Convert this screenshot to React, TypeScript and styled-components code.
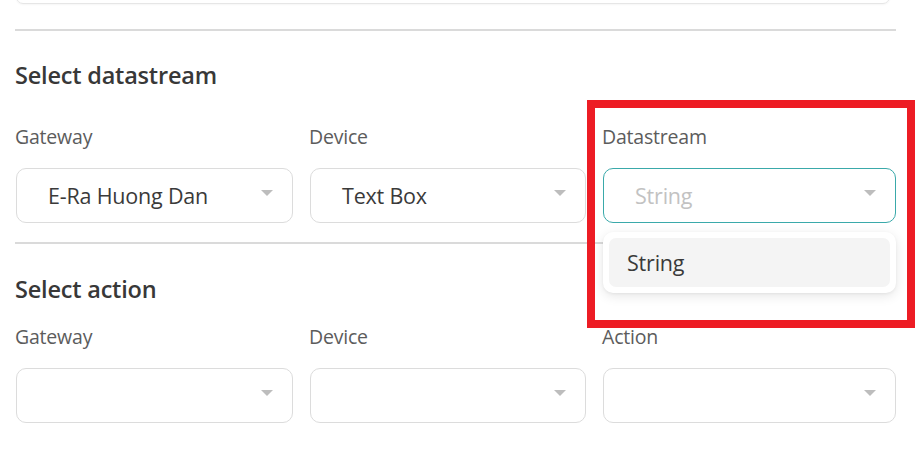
import React from "react";
import styled, { createGlobalStyle } from "styled-components";

const Global = createGlobalStyle`
  html, body { margin: 0; padding: 0; background: #ffffff; }
  body { font-family: "Open Sans", "Noto Sans", sans-serif; color: #333; }
  * { box-sizing: border-box; }
`;

const Page = styled.div`
  position: relative;
  width: 917px;
  height: 470px;
  overflow: hidden;
  padding: 0 21px 0 15px;
`;

const TopCard = styled.div`
  height: 14px;
  margin: -10px 6px 0 1px;
  border: 1px solid #e6e6e6;
  border-radius: 10px;
  box-shadow: 0 1px 2px rgba(0, 0, 0, 0.04);
`;

const Divider = styled.div<{ $top: number }>`
  height: 2px;
  background: #dadada;
  margin-top: ${(p) => p.$top}px;
`;

const Heading = styled.h2<{ $top: number; $bottom: number }>`
  margin: ${(p) => p.$top}px 0 ${(p) => p.$bottom}px;
  font-size: 23.5px;
  line-height: 30px;
  font-weight: 600;
  color: #383838;
  letter-spacing: -0.2px;
`;

const Grid = styled.div`
  display: grid;
  grid-template-columns: 277px 276px 293px;
  column-gap: 17px;
  padding-left: 1px;
`;

const Field = styled.div`
  position: relative;
  display: flex;
  flex-direction: column;
  gap: 19px;
`;

const Label = styled.div`
  margin-left: -1px;
  font-size: 19.5px;
  line-height: 24px;
  color: #5c5c5c;
  letter-spacing: -0.2px;
`;

const SelectBox = styled.div<{ $focused?: boolean }>`
  position: relative;
  height: 55px;
  display: flex;
  align-items: center;
  padding: 0 40px 0 31px;
  border: 1.5px solid ${(p) => (p.$focused ? "#3aa9aa" : "#dcdcdc")};
  border-radius: 10px;
  background: #fff;
`;

const Value = styled.span<{ $placeholder?: boolean }>`
  font-size: 21.5px;
  line-height: 26px;
  color: ${(p) => (p.$placeholder ? "#c2c2c2" : "#3a3a3a")};
  letter-spacing: -0.2px;
`;

const Arrow = styled.span`
  position: absolute;
  right: 19px;
  top: 21px;
  width: 0;
  height: 0;
  border-left: 6px solid transparent;
  border-right: 6px solid transparent;
  border-top: 6px solid #bdbdbd;
`;

const Menu = styled.div`
  position: absolute;
  left: 0;
  right: 0;
  top: calc(100% + 9px);
  padding: 6px;
  background: #fff;
  border-radius: 10px;
  box-shadow: 0 3px 12px rgba(0, 0, 0, 0.1), 0 1px 3px rgba(0, 0, 0, 0.05);
  z-index: 2;
`;

const Option = styled.div`
  height: 49px;
  display: flex;
  align-items: center;
  padding-left: 18px;
  background: #f4f4f4;
  border-radius: 7px;
  font-size: 21.5px;
  color: #3a3a3a;
  letter-spacing: -0.2px;
`;

const Highlight = styled.div`
  position: absolute;
  left: 587px;
  top: 100px;
  width: 328px;
  height: 228px;
  border: 8px solid #ed1c24;
  z-index: 3;
  pointer-events: none;
`;

type FieldDef = { label: string; value?: string; placeholder?: string; focused?: boolean; options?: string[] };

const Select: React.FC<FieldDef> = ({ label, value, placeholder, focused, options }) => (
  <Field>
    <Label>{label}</Label>
    <SelectBox $focused={focused}>
      {value ? <Value>{value}</Value> : placeholder ? <Value $placeholder>{placeholder}</Value> : null}
      <Arrow />
    </SelectBox>
    {options && (
      <Menu>
        {options.map((o) => (
          <Option key={o}>{o}</Option>
        ))}
      </Menu>
    )}
  </Field>
);

const datastream: FieldDef[] = [
  { label: "Gateway", value: "E-Ra Huong Dan" },
  { label: "Device", value: "Text Box" },
  { label: "Datastream", placeholder: "String", focused: true, options: ["String"] },
];

const action: FieldDef[] = [{ label: "Gateway" }, { label: "Device" }, { label: "Action" }];

export default function App() {
  return (
    <Page>
      <Global />
      <TopCard />
      <Divider $top={25} />
      <Heading $top={29} $bottom={35}>Select datastream</Heading>
      <Grid>
        {datastream.map((f) => (
          <Select key={f.label} {...f} />
        ))}
      </Grid>
      <Divider $top={19} />
      <Heading $top={30} $bottom={21}>Select action</Heading>
      <Grid>
        {action.map((f) => (
          <Select key={f.label} {...f} />
        ))}
      </Grid>
      <Highlight />
    </Page>
  );
}
